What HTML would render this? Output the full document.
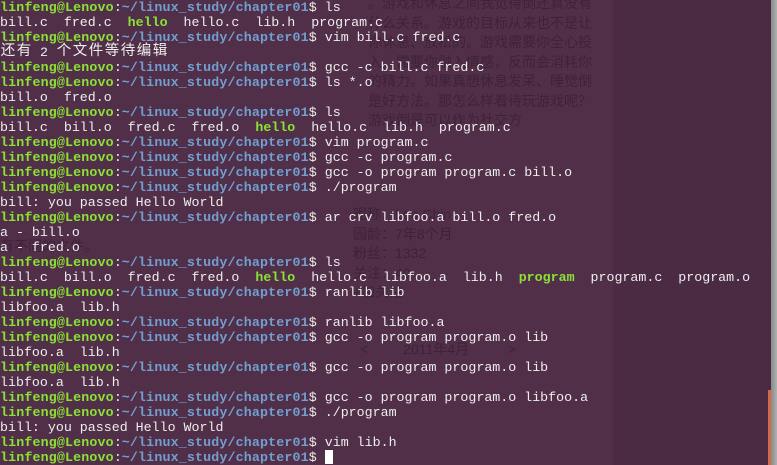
<!DOCTYPE html>
<html><head><meta charset="utf-8"><style>
html,body{margin:0;padding:0;width:777px;height:465px;overflow:hidden;background:#512f49}
#rp{position:absolute;left:613px;top:0;width:158px;height:465px;background:#4b2b43}
#sb{position:absolute;left:771px;top:0;width:6px;height:465px;background:linear-gradient(90deg,#8a8a8a,#b0b0b0)}
#th{position:absolute;left:768px;top:390px;width:3px;height:75px;background:#d26a45}
.g{position:absolute;color:rgba(20,5,15,0.3);font-family:"Liberation Sans","Noto Sans CJK SC",sans-serif;font-size:14px;line-height:19.5px;white-space:pre}
pre{position:absolute;left:0;top:0;margin:0;font-family:"Liberation Mono","Noto Sans CJK SC",monospace;font-size:13.3px;line-height:15px;color:#eeeeec;white-space:pre}
.p{color:#8ae234;font-weight:bold;letter-spacing:0.15px}.d{color:#729fcf;font-weight:bold;letter-spacing:0.15px}.h{color:#8ae234;font-weight:bold}
.k{display:inline-block;width:16px;height:15px;text-align:center;font-size:14.5px;line-height:15px;vertical-align:top;overflow:visible}
.c{display:inline-block;width:8px;height:14px;background:#fff;vertical-align:-3px}
</style></head><body>
<div id="rp"></div><div id="sb"></div><div id="th"></div>
<div class="g" style="left:368px;top:-6px">。游戏和休息之间我觉得倒还真没有<br>什么关系。游戏的目标从来也不是让<br>你休息、放松的。游戏需要你全心投<br>入，需要你融入情感，反而会消耗你<br>的精力。如果真想休息发呆、睡觉倒<br>是好方法。那怎么样看待玩游戏呢？<br>游戏倒是可以作为社交方</div>
<div class="g" style="left:353px;top:205px">昵称：Leo Chin<br>园龄：7年8个月<br>粉丝：1332<br>关注：40<br>+加关注</div>
<div class="g" style="left:360px;top:340px">&lt;         2011年4月          &gt;</div>
<div class="g" style="left:0;top:237px">有不同的文件。</div>
<pre><span class="p">linfeng@Lenovo</span>:<span class="d">~/linux_study/chapter01</span>$ ls
bill.c  fred.c  <span class="h">hello</span>  hello.c  lib.h  program.c
<span class="p">linfeng@Lenovo</span>:<span class="d">~/linux_study/chapter01</span>$ vim bill.c fred.c
<span class="k">还</span><span class="k">有</span> 2 <span class="k">个</span><span class="k">文</span><span class="k">件</span><span class="k">等</span><span class="k">待</span><span class="k">编</span><span class="k">辑</span>
<span class="p">linfeng@Lenovo</span>:<span class="d">~/linux_study/chapter01</span>$ gcc -c bill.c fred.c
<span class="p">linfeng@Lenovo</span>:<span class="d">~/linux_study/chapter01</span>$ ls *.o
bill.o  fred.o
<span class="p">linfeng@Lenovo</span>:<span class="d">~/linux_study/chapter01</span>$ ls
bill.c  bill.o  fred.c  fred.o  <span class="h">hello</span>  hello.c  lib.h  program.c
<span class="p">linfeng@Lenovo</span>:<span class="d">~/linux_study/chapter01</span>$ vim program.c
<span class="p">linfeng@Lenovo</span>:<span class="d">~/linux_study/chapter01</span>$ gcc -c program.c
<span class="p">linfeng@Lenovo</span>:<span class="d">~/linux_study/chapter01</span>$ gcc -o program program.c bill.o
<span class="p">linfeng@Lenovo</span>:<span class="d">~/linux_study/chapter01</span>$ ./program
bill: you passed Hello World
<span class="p">linfeng@Lenovo</span>:<span class="d">~/linux_study/chapter01</span>$ ar crv libfoo.a bill.o fred.o
a - bill.o
a - fred.o
<span class="p">linfeng@Lenovo</span>:<span class="d">~/linux_study/chapter01</span>$ ls
bill.c  bill.o  fred.c  fred.o  <span class="h">hello</span>  hello.c  libfoo.a  lib.h  <span class="h">program</span>  program.c  program.o
<span class="p">linfeng@Lenovo</span>:<span class="d">~/linux_study/chapter01</span>$ ranlib lib
libfoo.a  lib.h
<span class="p">linfeng@Lenovo</span>:<span class="d">~/linux_study/chapter01</span>$ ranlib libfoo.a
<span class="p">linfeng@Lenovo</span>:<span class="d">~/linux_study/chapter01</span>$ gcc -o program program.o lib
libfoo.a  lib.h
<span class="p">linfeng@Lenovo</span>:<span class="d">~/linux_study/chapter01</span>$ gcc -o program program.o lib
libfoo.a  lib.h
<span class="p">linfeng@Lenovo</span>:<span class="d">~/linux_study/chapter01</span>$ gcc -o program program.o libfoo.a
<span class="p">linfeng@Lenovo</span>:<span class="d">~/linux_study/chapter01</span>$ ./program
bill: you passed Hello World
<span class="p">linfeng@Lenovo</span>:<span class="d">~/linux_study/chapter01</span>$ vim lib.h
<span class="p">linfeng@Lenovo</span>:<span class="d">~/linux_study/chapter01</span>$ <span class="c"></span></pre>
</body></html>
